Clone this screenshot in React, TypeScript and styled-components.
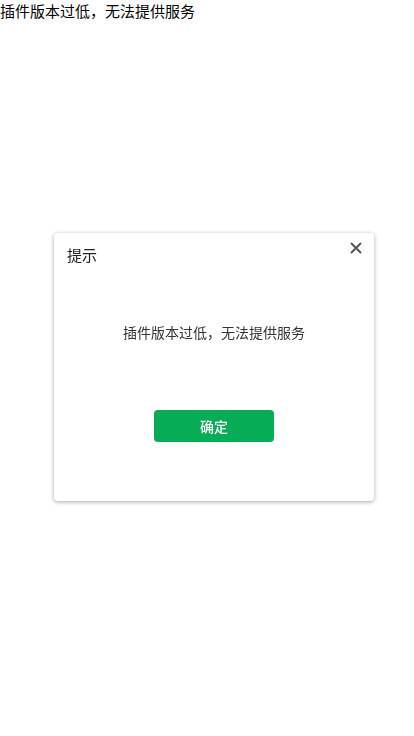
import React from "react";
import styled, { createGlobalStyle } from "styled-components";

const Global = createGlobalStyle`
  html, body { margin: 0; padding: 0; background: #fff; }
  body { font-family: "Noto Sans CJK SC", "Noto Sans", sans-serif; color: #000; }
`;

const PageText = styled.div`
  font-size: 15px;
  line-height: 21px;
  color: #000;
`;

const Dialog = styled.div`
  position: fixed;
  left: 54px;
  top: 233px;
  width: 320px;
  height: 268px;
  box-sizing: border-box;
  background: #fff;
  border-radius: 4px;
  box-shadow: 0 1px 4px rgba(0, 0, 0, 0.35);
  display: flex;
  flex-direction: column;
`;

const Header = styled.div`
  position: relative;
  padding: 11px 13px 0;
`;

const Title = styled.div`
  font-size: 15px;
  line-height: 21px;
  color: #222;
`;

const Close = styled.button`
  position: absolute;
  right: 9px;
  top: 6px;
  width: 18px;
  height: 18px;
  padding: 0;
  border: 0;
  background: transparent;
  display: flex;
  align-items: center;
  justify-content: center;
  cursor: pointer;
`;

const Body = styled.div`
  margin-top: 57px;
  text-align: center;
  font-size: 14px;
  line-height: 20px;
  color: #333;
`;

const Footer = styled.div`
  display: flex;
  justify-content: center;
  margin-top: 68px;
`;

const ConfirmButton = styled.button`
  width: 120px;
  height: 32px;
  border: 0;
  border-radius: 4px;
  background: #07ad56;
  color: #fff;
  font-family: "Noto Sans CJK SC", sans-serif;
  font-size: 14px;
  font-weight: 500;
  cursor: pointer;
`;

export default function App() {
  return (
    <>
      <Global />
      <PageText>插件版本过低，无法提供服务</PageText>
      <Dialog>
        <Header>
          <Title>提示</Title>
          <Close aria-label="close">
            <svg width="12" height="12" viewBox="0 0 12 12">
              <path d="M1.5 1.5 L10.5 10.5 M10.5 1.5 L1.5 10.5" stroke="#555" strokeWidth="2" strokeLinecap="round" />
            </svg>
          </Close>
        </Header>
        <Body>插件版本过低，无法提供服务</Body>
        <Footer>
          <ConfirmButton>确定</ConfirmButton>
        </Footer>
      </Dialog>
    </>
  );
}
